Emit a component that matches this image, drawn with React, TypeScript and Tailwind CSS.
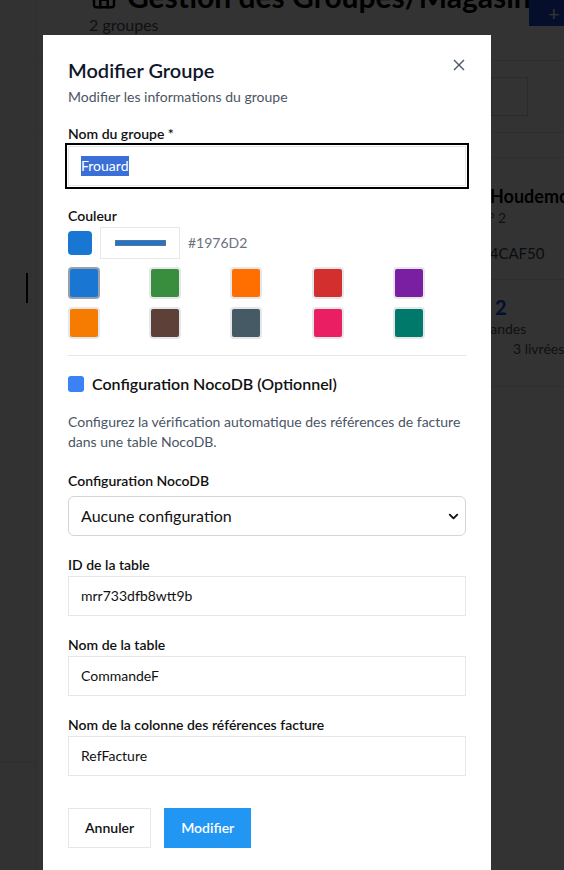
import React from 'react';
import { ChevronDown, Store } from 'lucide-react';

const swatches = [
  '#1976D2', '#388E3C', '#FF6F00', '#D32F2F', '#7B1FA2',
  '#F57C00', '#5D4037', '#455A64', '#E91E63', '#00796B',
];

const Field: React.FC<{ label: string; value: string }> = ({ label, value }) => (
  <div className="mt-[19px]">
    <label className="block text-sm font-semibold leading-5 text-[#111]">{label}</label>
    <div className="mt-px flex h-10 items-center border border-gray-200 px-3 text-sm text-[#111]">
      {value}
    </div>
  </div>
);

const BackgroundPage: React.FC = () => (
  <div className="flex h-full w-full">
    {/* left rail */}
    <div className="flex w-[37px] shrink-0 flex-col border-r border-gray-200 bg-gray-50">
      <div className="h-[273px]" />
      <div className="ml-[26px] h-[30px] w-[2px] bg-black" />
      <div className="flex-1" />
      <div className="h-[108px] border-t border-gray-200" />
    </div>

    {/* main page (scrolled, overflows to the right) */}
    <div className="w-[527px] shrink-0 bg-white">
      <div className="-mt-[22px] flex items-start pl-[52px]">
        <div className="min-w-0 flex-1">
          <div className="flex items-center gap-2 whitespace-nowrap text-[30px] font-bold leading-9 text-black">
            <Store size={30} className="shrink-0" />
            <span>Gestion des Groupes/Magasins</span>
          </div>
          <div className="-mt-px text-base leading-6 text-gray-600">2 groupes</div>
        </div>
        <div className="-mr-[100px] mt-[22px] flex h-[26px] w-[135px] shrink-0 items-center whitespace-nowrap bg-[#1d4ed8] pl-[19px] text-sm leading-none text-white">
          <span className="text-xl">+</span>
          <span className="ml-2">Nouveau groupe</span>
        </div>
      </div>

      <div className="mt-[23px] w-[700px] border-y border-gray-200 py-4 pl-[454px]">
        <div className="h-[39px] w-[37px] border border-gray-300" />
      </div>

      <div className="flex gap-4 pl-[46px] pt-[24px]">
        <div className="h-[230px] w-[360px] shrink-0 border border-gray-200" />
        <div className="w-[360px] shrink-0 border border-gray-200 bg-white">
          <div className="pl-[30px] pt-[26px] pb-[16px]">
            <div className="text-lg font-bold leading-6 text-black">Houdemont</div>
            <div className="-ml-[12px] text-sm leading-5 text-gray-600">N° 2</div>
            <div className="-ml-[9px] mt-[15px] text-[15px] leading-5 text-gray-700">#4CAF50</div>
          </div>
          <div className="border-t border-gray-200 pl-[30px] pt-[15px] pb-[22px]">
            <div className="pl-[5px] text-xl font-bold leading-6 text-blue-700">2</div>
            <div className="-ml-[40px] text-sm leading-5 text-gray-600">Commandes</div>
            <div className="pl-[23px] text-sm leading-5 text-gray-600">3 livrées (100%)</div>
          </div>
        </div>
      </div>
    </div>
  </div>
);

export default function App() {
  return (
    <div className="relative h-[870px] w-[564px] overflow-hidden font-['Lato','Open_Sans',sans-serif]">
      <BackgroundPage />
      <div className="absolute inset-0 bg-black/80" />

      {/* dialog */}
      <div className="absolute left-[43px] top-[35px] bottom-0 w-[448px] bg-white px-[25px] pt-[21px]">
        <button className="absolute right-[24px] top-[22px] p-0.5 text-gray-600">
          <svg width="12" height="12" viewBox="0 0 12 12" fill="none" stroke="currentColor" strokeWidth="1.4">
            <path d="M1 1l10 10M11 1L1 11" />
          </svg>
        </button>

        <h2 className="text-xl font-semibold leading-7 text-[#0f172a]">Modifier Groupe</h2>
        <p className="mt-[3px] text-sm leading-5 text-gray-600">Modifier les informations du groupe</p>

        <div className="mt-[17px]">
          <label className="block text-sm font-semibold leading-5 text-[#111]">Nom du groupe *</label>
          <div className="mt-[2px] flex h-10 items-center border border-gray-200 px-3 text-sm outline-2 outline-offset-1 outline-black">
            <span className="bg-[#3a6fd8] text-white">Frouard</span>
          </div>
        </div>

        <div className="mt-[20px]">
          <label className="block text-sm font-semibold leading-5 text-[#111]">Couleur</label>
          <div className="mt-px flex h-8 items-center gap-2">
            <div className="h-6 w-6 rounded-[4px] bg-[#1976D2]" />
            <div className="flex h-8 w-20 items-center justify-center border border-gray-200">
              <div className="h-[6px] w-[51px] border border-gray-500 bg-[#1976D2]" />
            </div>
            <span className="text-sm text-gray-500">#1976D2</span>
          </div>
          <div className="mt-2 grid grid-cols-5 gap-2">
            {swatches.map((c, i) => (
              <div
                key={c}
                className={`h-8 w-8 rounded-[4px] border-2 ${i === 0 ? 'border-gray-400' : 'border-gray-200'}`}
                style={{ backgroundColor: c }}
              />
            ))}
          </div>
        </div>

        <div className="mt-4 border-t border-gray-200" />

        <div className="mt-4 flex items-center gap-2">
          <div className="h-4 w-4 rounded-[3px] bg-[#3b82f6]" />
          <span className="text-base font-semibold leading-6 text-[#111]">Configuration NocoDB (Optionnel)</span>
        </div>
        <p className="mt-4 text-sm leading-5 text-gray-600">
          Configurez la vérification automatique des références de facture dans une table NocoDB.
        </p>

        <div className="mt-[19px]">
          <label className="block text-sm font-semibold leading-5 text-[#111]">Configuration NocoDB</label>
          <div className="mt-[5px] flex h-10 items-center justify-between rounded-md border border-gray-300 pr-[4px] pl-3 text-base text-[#111]">
            <span>Aucune configuration</span>
            <ChevronDown size={15} strokeWidth={3} />
          </div>
        </div>

        <Field label="ID de la table" value="mrr733dfb8wtt9b" />
        <Field label="Nom de la table" value="CommandeF" />
        <Field label="Nom de la colonne des références facture" value="RefFacture" />

        <div className="mt-8 flex gap-[13px]">
          <button className="h-10 border border-gray-200 px-4 text-sm font-semibold text-[#111]">Annuler</button>
          <button className="h-10 bg-[#2196F3] px-[17px] text-sm font-semibold text-white">Modifier</button>
        </div>
      </div>
    </div>
  );
}
